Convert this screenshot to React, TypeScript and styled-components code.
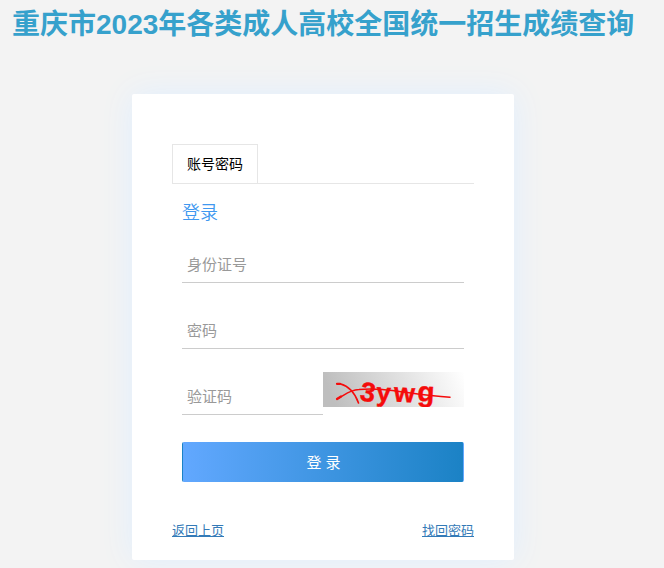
import React from "react";
import styled, { createGlobalStyle } from "styled-components";

const GlobalStyle = createGlobalStyle`
  * { box-sizing: border-box; }
  html, body { margin: 0; background: #f3f3f3; }
  body {
    height: 568px;
    overflow: hidden;
    font-family: "Liberation Sans", "Noto Sans CJK SC", sans-serif;
  }
`;

const Page = styled.main`
  height: 568px;
  overflow: hidden;
  background: #f3f3f3;
`;

const Title = styled.h1`
  margin: 0;
  height: 94px;
  padding: 5px 0 0 12px;
  font-size: 28px;
  line-height: 40px;
  font-weight: 700;
  color: #36a1cc;
  white-space: nowrap;
`;

const Card = styled.section`
  width: 382px;
  height: 466px;
  margin-left: 132px;
  padding: 50px 40px 0;
  background: #fff;
  border-radius: 2px;
  box-shadow: 0 0 32px #e0efff;
`;

const TabBar = styled.div`
  display: flex;
  height: 40px;
  border-bottom: 1px solid #e6e6e6;
`;

const Tab = styled.div`
  width: 86px;
  height: 40px;
  border: 1px solid #e6e6e6;
  font-size: 14px;
  line-height: 38px;
  text-align: center;
  color: #000;
`;

const Form = styled.form`
  padding: 0 10px;
`;

const Heading = styled.h2`
  margin: 0;
  height: 63px;
  padding-top: 17px;
  font-size: 18px;
  line-height: 24px;
  font-weight: 350;
  color: #3f98f0;
`;

const Row = styled.div`
  display: flex;
  height: 66px;
`;

const Field = styled.input<{ $half?: boolean }>`
  width: ${(p) => (p.$half ? "50%" : "100%")};
  height: 36px;
  padding: 0 5px;
  border: 0;
  border-bottom: 1px solid #ccc;
  border-radius: 0;
  outline: 0;
  background: transparent;
  font-family: inherit;
  font-size: 15px;
  font-weight: 400;
  &::placeholder { color: #999; opacity: 1; }
`;

const Captcha = styled.svg`
  display: block;
  width: 141px;
  height: 35px;
  margin-top: -7px;
`;

const Submit = styled.button`
  display: block;
  width: 100%;
  height: 40px;
  margin-top: -3px;
  padding: 1px 0 0 1px;
  border: 1px solid transparent;
  border-radius: 2px;
  background-image: linear-gradient(90deg, #62a8ff, #1b82c5);
  color: #fff;
  font-family: inherit;
  font-size: 15px;
  line-height: 37px;
`;

const Links = styled.nav`
  display: flex;
  justify-content: space-between;
  margin-top: 39px;
`;

const Link = styled.a`
  font-size: 13px;
  line-height: 20px;
  color: #337ab7;
  font-weight: 400;
  text-decoration: underline;
`;

function CaptchaImage() {
  return (
    <Captcha viewBox="0 0 141 35" role="img">
      <defs>
        <linearGradient id="fade" x1="0" y1="0.1" x2="1" y2="0">
          <stop offset="0" stopColor="#bebebe" />
          <stop offset="1" stopColor="#fff" />
        </linearGradient>
      </defs>
      <rect width="141" height="35" fill="url(#fade)" />
      <g
        fill="#f50b0b"
        stroke="#f50b0b"
        strokeWidth="0.4"
        fontFamily="Liberation Sans"
        fontWeight="700"
        fontSize="26"
      >
        <text transform="translate(36 28) rotate(10)" fontSize="27">3</text>
        <text transform="translate(53 29) rotate(3)">y</text>
        <text transform="translate(70.5 29.5) rotate(3)" fontSize="27">w</text>
        <text transform="translate(94 29) rotate(3)" fontSize="28">g</text>
      </g>
      <g fill="none" stroke="#f50b0b" strokeLinecap="round">
        <path d="M14 11.8 H17 C25 14 32 21 35.5 31" strokeWidth="1.6" />
        <path d="M14 27 C22 23 26 18 36 17.5 C62 15 84 22 127 25.3" strokeWidth="1.5" />
        <path d="M14 11.8 H17 M14 27 L18 24.5" strokeWidth="2.2" />
      </g>
    </Captcha>
  );
}

export default function App() {
  return (
    <Page>
      <GlobalStyle />
      <Title>重庆市2023年各类成人高校全国统一招生成绩查询</Title>
      <Card>
        <TabBar>
          <Tab>账号密码</Tab>
        </TabBar>
        <Form>
          <Heading>登录</Heading>
          <Row><Field placeholder="身份证号" /></Row>
          <Row><Field type="password" placeholder="密码" /></Row>
          <Row>
            <Field $half placeholder="验证码" />
            <CaptchaImage />
          </Row>
          <Submit type="button">登 录</Submit>
        </Form>
        <Links>
          <Link href="#">返回上页</Link>
          <Link href="#">找回密码</Link>
        </Links>
      </Card>
    </Page>
  );
}
